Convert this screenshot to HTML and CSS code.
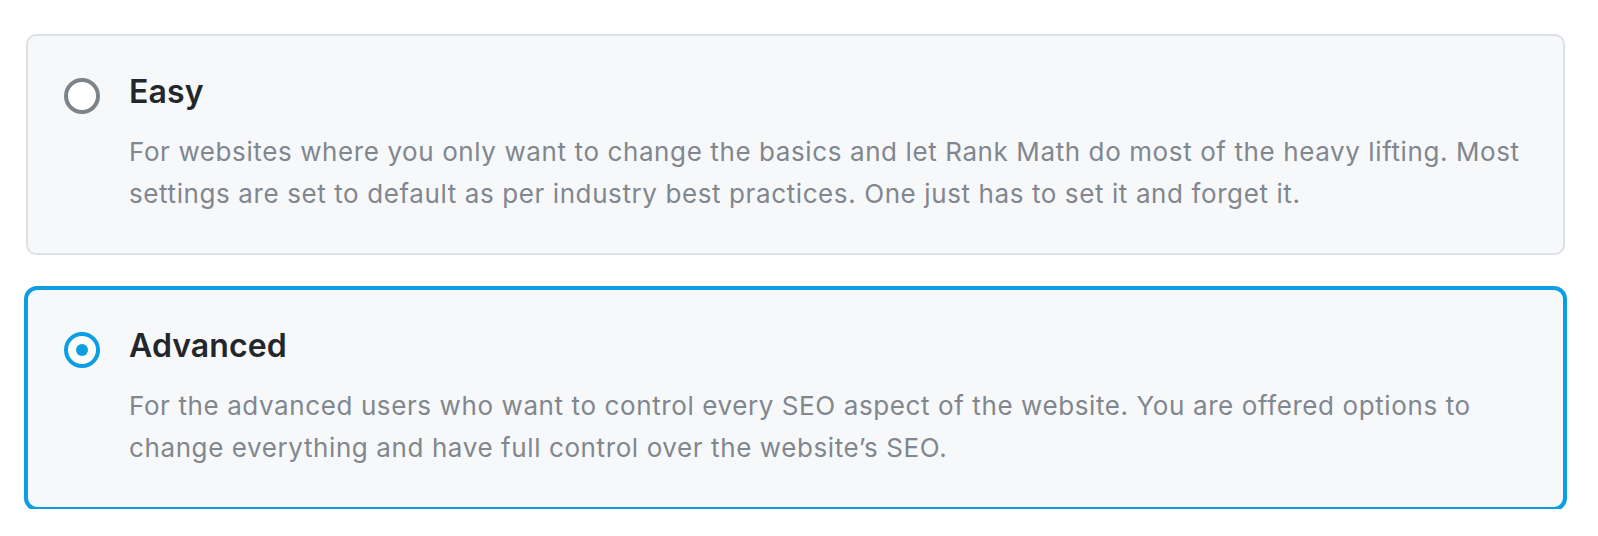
FILE: index.html
```html
<!DOCTYPE html>
<html lang="en">
<head>
<meta charset="utf-8">
<title>Mode</title>
<link rel="stylesheet" href="styles.css">
</head>
<body>
<div class="options">
  <label class="option">
    <span class="radio"></span>
    <span class="body">
      <span class="title">Easy</span>
      <span class="desc">For websites where you only want to change the basics and let Rank Math do most of the heavy lifting. Most settings are set to default as per industry best practices. One just has to set it and forget it.</span>
    </span>
  </label>
  <label class="option selected">
    <span class="radio"></span>
    <span class="body">
      <span class="title">Advanced</span>
      <span class="desc">For the advanced users who want to control every SEO aspect of the website. You are offered options to change everything and have full control over the website’s SEO.</span>
    </span>
  </label>
</div>
</body>
</html>
```

FILE: styles.css
```css
html, body {
  margin: 0;
  padding: 0;
  background: #ffffff;
}
body {
  font-family: Inter, "Noto Sans", "Liberation Sans", sans-serif;
}
.options {
  display: flex;
  flex-direction: column;
  gap: 33px;
  padding: 34px 33px 0 26px;
}
.option {
  display: grid;
  grid-template-columns: 36px 1fr;
  column-gap: 29px;
  background: #f7f8fa;
  border: 2px solid #dde0e4;
  border-radius: 10px;
  padding: 36px 36px 39px 36px;
}
.option.selected {
  border-color: #0b9ee3;
  box-shadow: 0 0 0 2px #0b9ee3;
  border-radius: 11px;
}
.radio {
  box-sizing: border-box;
  width: 36px;
  height: 36px;
  margin-top: 6px;
  border: 4px solid #7c838a;
  border-radius: 50%;
  background: #ffffff;
  display: flex;
  align-items: center;
  justify-content: center;
}
.selected .radio {
  border-color: #0b9ee3;
}
.selected .radio::after {
  content: "";
  width: 12px;
  height: 12px;
  border-radius: 50%;
  background: #0b9ee3;
}
.body {
  display: flex;
  flex-direction: column;
}
.title {
  font-size: 32px;
  line-height: 40px;
  font-weight: 600;
  letter-spacing: 0.1px;
  color: #23272b;
}
.desc {
  margin-top: 19px;
  font-size: 26px;
  line-height: 41.6px;
  letter-spacing: 0.6px;
  color: #80878e;
}
```
